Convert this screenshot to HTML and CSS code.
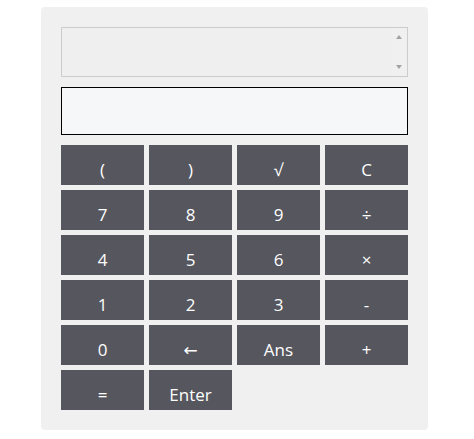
FILE: index.html
```html
<!DOCTYPE html>
<html>
<head>
<meta charset="utf-8">
<link rel="stylesheet" href="styles.css">
</head>
<body>
<div class="calc">
  <div class="history">
    <div class="history-text"></div>
    <div class="scrollbar">
      <span class="arrow-up"></span>
      <span class="arrow-down"></span>
    </div>
  </div>
  <div class="entry"></div>
  <div class="keys">
    <div class="key">(</div>
    <div class="key">)</div>
    <div class="key">√</div>
    <div class="key">C</div>
    <div class="key">7</div>
    <div class="key">8</div>
    <div class="key">9</div>
    <div class="key">÷</div>
    <div class="key">4</div>
    <div class="key">5</div>
    <div class="key">6</div>
    <div class="key">×</div>
    <div class="key">1</div>
    <div class="key">2</div>
    <div class="key">3</div>
    <div class="key">-</div>
    <div class="key">0</div>
    <div class="key">←</div>
    <div class="key">Ans</div>
    <div class="key">+</div>
    <div class="key">=</div>
    <div class="key">Enter</div>
  </div>
</div>
</body>
</html>
```

FILE: styles.css
```css
html, body {
  margin: 0;
  padding: 0;
  background: #ffffff;
}
body {
  padding: 7px 0 0 41px;
  font-family: "Open Sans", "Noto Sans", "DejaVu Sans", sans-serif;
}
.calc {
  width: 387px;
  box-sizing: border-box;
  padding: 20px;
  background: #f0f0f0;
  border-radius: 4px;
  display: flex;
  flex-direction: column;
}
.history {
  height: 50px;
  box-sizing: border-box;
  border: 1px solid #cccccc;
  background: #efefef;
  display: flex;
}
.history-text {
  flex: 1;
}
.scrollbar {
  width: 15px;
  margin-right: 1px;
  background: #f0f0f0;
  display: flex;
  flex-direction: column;
  justify-content: space-between;
  align-items: center;
  padding: 7px 0 7px;
}
.arrow-up {
  width: 0;
  height: 0;
  border-left: 3.5px solid transparent;
  border-right: 3.5px solid transparent;
  border-bottom: 4px solid #a3a3a3;
}
.arrow-down {
  width: 0;
  height: 0;
  border-left: 3.5px solid transparent;
  border-right: 3.5px solid transparent;
  border-top: 4px solid #a3a3a3;
}
.entry {
  margin-top: 10px;
  height: 48px;
  box-sizing: border-box;
  border: 1.5px solid #000000;
  background: #f6f7f9;
}
.keys {
  margin-top: 10px;
  display: grid;
  grid-template-columns: repeat(4, 83px);
  grid-auto-rows: 40px;
  gap: 5px;
}
.key {
  background: #55565e;
  color: #ffffff;
  font-size: 17px;
  display: flex;
  align-items: center;
  justify-content: center;
  padding-top: 9px;
  box-sizing: border-box;
}
```
